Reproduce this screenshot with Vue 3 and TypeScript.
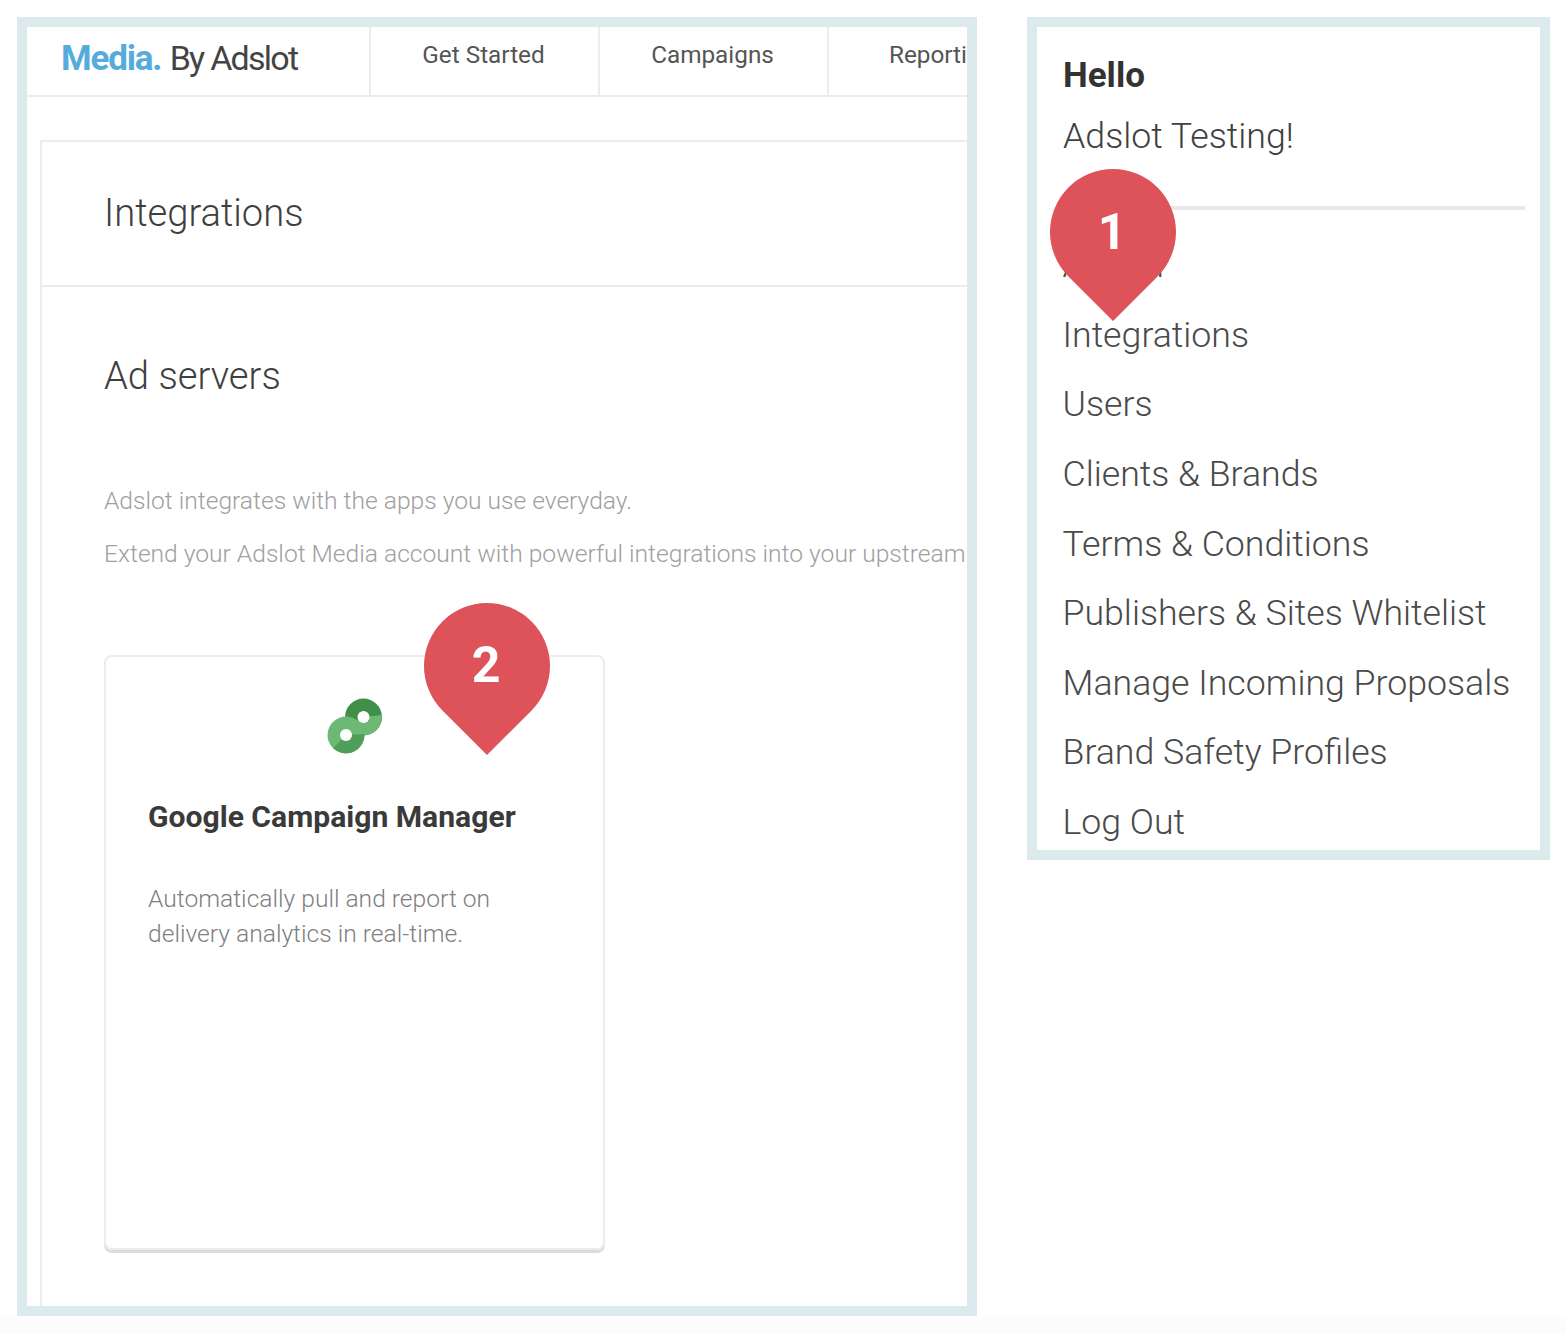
<script setup lang="ts">
const vNavItems = ['Get Started', 'Campaigns', 'Reporting']
const vMenuItems = [
  'Admin',
  'Integrations',
  'Users',
  'Clients & Brands',
  'Terms & Conditions',
  'Publishers & Sites Whitelist',
  'Manage Incoming Proposals',
  'Brand Safety Profiles',
  'Log Out'
]
</script>

<template>
  <div class="page">
    <section class="frame frame-main">
      <header class="topbar">
        <div class="brand"><b>Media.</b> <span>By Adslot</span></div>
        <nav class="nav">
          <a v-for="item in vNavItems" :key="item" class="nav-item">{{ item }}</a>
        </nav>
      </header>

      <div class="panel">
        <h1 class="panel-title">Integrations</h1>
        <div class="panel-body">
          <h2 class="section-title">Ad servers</h2>
          <p class="intro intro-first">Adslot integrates with the apps you use everyday.</p>
          <p class="intro">Extend your Adslot Media account with powerful integrations into your upstream and downstream systems.</p>

          <div class="card">
            <svg class="card-icon" width="56" height="56" viewBox="0 0 56 56">
              <circle cx="36.500" cy="19" r="18.500" fill="#41904a" />
              <path d="M55 17A18.500 18.500 0 0 1 20 27L36.500 19Z" fill="#6db875" />
              <circle cx="36.500" cy="19" r="6" fill="#fff" />
              <circle cx="19" cy="37" r="18.500" fill="#6db875" />
              <path d="M37.500 36A18.500 18.500 0 0 1 6 50L19 37Z" fill="#4f9f58" />
              <circle cx="19" cy="37" r="6" fill="#fff" />
            </svg>
            <h3 class="card-title">Google Campaign Manager</h3>
            <p class="card-text">Automatically pull and report on delivery analytics in real-time.</p>
          </div>
        </div>
      </div>
      <div class="pin pin-two"><span>2</span></div>
    </section>

    <aside class="frame frame-menu">
      <div class="hello">Hello</div>
      <div class="account-name">Adslot Testing!</div>
      <hr class="divider" />
      <ul class="menu">
        <li v-for="item in vMenuItems" :key="item">{{ item }}</li>
      </ul>
      <div class="pin pin-one"><span>1</span></div>
    </aside>
  </div>
</template>

<style>
html,
body {
  margin: 0;
  background: #fff;
}
</style>

<style scoped>
.page {
  width: 1566px;
  height: 1334px;
  box-sizing: border-box;
  padding: 17px 16px 0 17px;
  display: flex;
  align-items: flex-start;
  gap: 50px;
  overflow: hidden;
  font-family: Roboto, "Liberation Sans", sans-serif;
  background: linear-gradient(#fff 1316px, #fcfcfc 1318px);
}

.frame {
  position: relative;
  box-sizing: border-box;
  border: 10px solid #dce9ed;
  background: #fff;
  overflow: hidden;
}

.frame-main {
  width: 960px;
  height: 1299px;
}

.frame-menu {
  width: 523px;
  height: 843px;
  padding: 26px 15px 0 26px;
}

.topbar {
  display: flex;
  height: 70px;
  border-bottom: 2px solid #ececec;
  box-sizing: border-box;
}

.brand {
  width: 342px;
  flex: none;
  box-sizing: border-box;
  padding: 9px 0 0 34px;
  font-size: 35px;
  line-height: 44px;
  letter-spacing: -1.2px;
  color: #444;
  white-space: nowrap;
}

.brand b {
  color: #56abdd;
  font-weight: 700;
}

.brand span {
  margin-left: 1px;
  font-size: 34px;
  letter-spacing: -1.75px;
}

.nav {
  display: flex;
}

.nav-item {
  width: 229px;
  box-sizing: border-box;
  flex: none;
  border-left: 2px solid #ececec;
  padding: 13px 2px 0 0;
  text-align: center;
  font-size: 24.3px;
  line-height: 30px;
  color: #555;
  white-space: nowrap;
}

.panel {
  margin: 43px 0 0 13px;
  border: solid #ececec;
  border-width: 2px 0 0 2px;
  height: 1200px;
}

.panel-title {
  margin: 0;
  height: 145px;
  box-sizing: border-box;
  padding: 44px 0 0 62px;
  border-bottom: 2px solid #ececec;
  font-size: 38.2px;
  line-height: 54px;
  font-weight: 300;
  color: #3f3f3f;
}

.panel-body {
  padding: 62px 0 0 62px;
}

.section-title {
  margin: 0;
  font-size: 38.2px;
  line-height: 54px;
  font-weight: 300;
  color: #3f3f3f;
}

.intro {
  margin: 26px 0 0;
  font-size: 24.6px;
  line-height: 30px;
  font-weight: 300;
  color: #a0a0a0;
  white-space: nowrap;
}

.intro-first {
  margin-top: 83px;
}

.intro + .intro {
  margin-top: 23px;
}

.card {
  margin-top: 86px;
  width: 501px;
  height: 595px;
  box-sizing: border-box;
  border: 2px solid #ececec;
  border-radius: 8px;
  box-shadow: 0 3px 0 #dcdcdc;
  padding: 41px 42px 0;
}

.card-icon {
  display: block;
  margin: 0 auto;
}

.card-title {
  margin: 43px 0 0;
  font-size: 30.1px;
  line-height: 40px;
  font-weight: 700;
  color: #3a3a3a;
  white-space: nowrap;
}

.card-text {
  margin: 43.5px 0 0;
  font-size: 24.6px;
  line-height: 35px;
  font-weight: 300;
  color: #808080;
}

.hello {
  font-size: 35px;
  line-height: 46px;
  font-weight: 700;
  color: #333;
}

.account-name {
  margin-top: 14px;
  font-size: 35.7px;
  line-height: 46px;
  font-weight: 300;
  color: #3f3f3f;
}

.divider {
  margin: 47px 0 0;
  border: 0;
  height: 4px;
  background: #e8e8e8;
}

.menu {
  margin: 0 0 0 -0.5px;
  padding: 32.2px 0 0;
  list-style: none;
}

.menu li {
  height: 69.6px;
  font-size: 35.7px;
  line-height: 46px;
  font-weight: 300;
  color: #4a4a4a;
  white-space: nowrap;
}

.pin {
  position: absolute;
  width: 126px;
  height: 126px;
  display: flex;
  align-items: center;
  justify-content: center;
}

.pin::before {
  content: "";
  position: absolute;
  inset: 0;
  background: #dd5359;
  border-radius: 50% 50% 0 50%;
  transform: rotate(45deg);
}

.pin span {
  position: relative;
  margin: -2px 2px 0 0;
  font-size: 50px;
  line-height: 60px;
  font-weight: 700;
  color: #fff;
}

.pin-one span {
  margin-top: 0;
}

.pin-one {
  left: 13px;
  top: 142px;
}

.pin-two {
  left: 397px;
  top: 576px;
}
</style>
